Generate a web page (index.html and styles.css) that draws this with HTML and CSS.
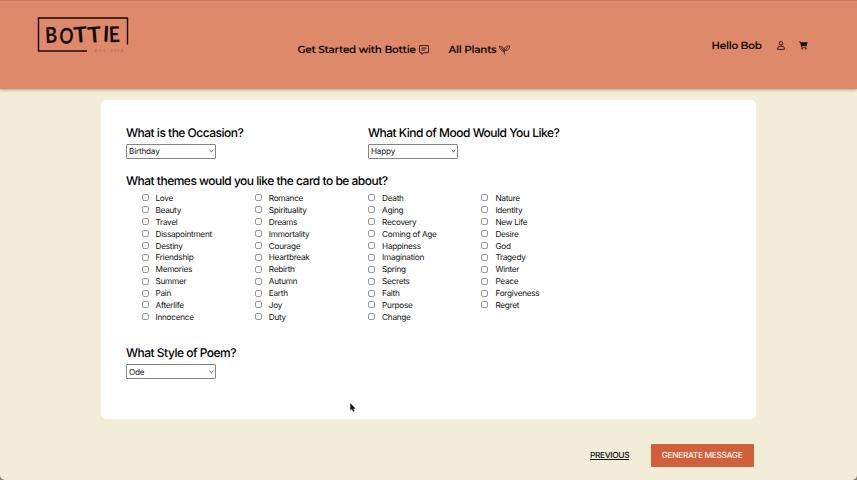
FILE: index.html
```html
<!DOCTYPE html>
<html lang="en">
<head>
<meta charset="utf-8">
<title>Bottie</title>
<link rel="stylesheet" href="styles.css">
</head>
<body>
<header class="header">
  <a class="logo" aria-label="Bottie">
    <svg width="92" height="38" viewBox="0 0 92 38">
      <path d="M50 34H1.5V1H90.5V27.5" fill="none" stroke="#150b08" stroke-width="1.4"/>
      <g class="logo-name">
        <text transform="translate(8.4 26) rotate(-3) scale(.84 1)">B</text>
        <text transform="translate(21.8 26) rotate(5) scale(.8 1)">O</text>
        <text transform="translate(37.3 26) rotate(-5) scale(1.04 1)">T</text>
        <text transform="translate(51.2 26) rotate(-5) scale(1.04 1)">T</text>
        <text transform="translate(65.6 24.4) rotate(3)">I</text>
        <text transform="translate(72 25.2) rotate(-2) scale(.88 1)">E</text>
      </g>
      <text class="logo-est" x="58" y="35.3" textLength="28">EST. 2023</text>
    </svg>
  </a>
  <nav class="nav">
    <a class="nav-start"><span>Get Started with Bottie</span>
      <svg width="10" height="10" viewBox="0 0 10 10" fill="none" stroke="#20120d" stroke-width=".85"><path d="M1 .6h8q.5 0 .5.5v6q0 .5-.5.5H5L2.7 9.4V7.6H1q-.5 0-.5-.5v-6Q.5.6 1 .6z"/><path d="M2.3 3.1h5.4M2.3 5.1h3.6"/></svg></a>
    <a class="nav-plants"><span>All Plants</span>
      <svg width="11" height="10" viewBox="0 0 11 10" fill="none" stroke="#20120d" stroke-width=".7"><path d="M5.4 9.6V6.4M5.2 6.4C2.2 6.2.6 4 .5 1c3 .1 4.4 2 4.7 5.4zM5.6 5.2C4.8 2.6 7 .8 10.5.8c.2 3.2-1.6 5.4-4.9 4.4zM1.8 2.2l3.4 4.2 3.6-4.2"/></svg></a>
  </nav>
  <div class="account">
    <span class="hello">Hello Bob</span>
    <svg class="user" width="8" height="9" viewBox="0 0 8 9" fill="none" stroke="#20120d" stroke-width=".9"><circle cx="4" cy="2.4" r="1.8"/><path d="M.6 8.4C.6 6.1 1.5 5.2 3 5.2h2c1.5 0 2.4.9 2.4 3.2z"/></svg>
    <svg class="cart" width="9" height="9" viewBox="0 0 9 9"><path fill="#150b08" d="M0 .5h1.6l.3.8h6.8L7.7 5H2.8l.2.8h4.7v.7H2.3L1.1 1.2H0z"/><circle cx="3.1" cy="7.7" r=".8" fill="#150b08"/><circle cx="6.9" cy="7.7" r=".8" fill="#150b08"/></svg>
  </div>
</header>
<main>
  <form class="card">
    <div class="top">
      <section><h2>What is the Occasion?</h2><div class="select">Birthday<svg width="5" height="4" viewBox="0 0 5 4"><path d="M.6 1l1.9 1.8L4.4 1"/></svg></div></section>
      <section><h2>What Kind of Mood Would You Like?</h2><div class="select">Happy<svg width="5" height="4" viewBox="0 0 5 4"><path d="M.6 1l1.9 1.8L4.4 1"/></svg></div></section>
    </div>
    <section class="themes">
      <h2>What themes would you like the card to be about?</h2>
      <div class="grid">
        <label><i></i>Love</label><label><i></i>Beauty</label><label><i></i>Travel</label><label><i></i>Dissapointment</label><label><i></i>Destiny</label><label><i></i>Friendship</label><label><i></i>Memories</label><label><i></i>Summer</label><label><i></i>Pain</label><label><i></i>Afterlife</label><label><i></i>Innocence</label>
        <label><i></i>Romance</label><label><i></i>Spirituality</label><label><i></i>Dreams</label><label><i></i>Immortality</label><label><i></i>Courage</label><label><i></i>Heartbreak</label><label><i></i>Rebirth</label><label><i></i>Autumn</label><label><i></i>Earth</label><label><i></i>Joy</label><label><i></i>Duty</label>
        <label><i></i>Death</label><label><i></i>Aging</label><label><i></i>Recovery</label><label><i></i>Coming of Age</label><label><i></i>Happiness</label><label><i></i>Imagination</label><label><i></i>Spring</label><label><i></i>Secrets</label><label><i></i>Faith</label><label><i></i>Purpose</label><label><i></i>Change</label>
        <label><i></i>Nature</label><label><i></i>Identity</label><label><i></i>New Life</label><label><i></i>Desire</label><label><i></i>God</label><label><i></i>Tragedy</label><label><i></i>Winter</label><label><i></i>Peace</label><label><i></i>Forgiveness</label><label><i></i>Regret</label>
      </div>
    </section>
    <section class="style"><h2>What Style of Poem?</h2><div class="select">Ode<svg width="5" height="4" viewBox="0 0 5 4"><path d="M.6 1l1.9 1.8L4.4 1"/></svg></div></section>
  </form>
  <div class="actions"><a class="previous">PREVIOUS</a><a class="generate">GENERATE MESSAGE</a></div>
</main>
<svg class="cursor" width="6" height="9" viewBox="0 0 6 9"><path d="M.5.5v6.6L2 5.8l1.1 2.6 1.2-.5-1.1-2.5h2z" fill="#111" stroke="#111" stroke-width=".4"/></svg>
</body>
</html>
```
FILE: styles.css
```css
* { box-sizing: border-box; }
html { background: #8a8069; }
body {
  margin: 0;
  height: 480px;
  overflow: hidden;
  background: #f2edd8;
  border-radius: 0 0 5px 5px;
  font-family: Inter, "Liberation Sans", sans-serif;
  color: #111;
  text-rendering: geometricPrecision;
}
.header {
  display: flex;
  height: 89px;
  padding-left: 37px;
  background: #de896a;
  border-top: 1px solid #c97d62;
  box-shadow: 0 1px 3px rgba(0, 0, 0, .3);
  font-family: Montserrat, Inter, sans-serif;
  font-size: 10.4px;
  font-weight: 600;
  line-height: 14px;
  letter-spacing: -.24px;
  color: #0d0705;
  white-space: nowrap;
}
.logo { width: 260.5px; padding-top: 16px; letter-spacing: 0; }
.logo svg { display: block; }
.logo-name {
  font: 700 21.8px Lato, sans-serif;
  fill: #150b08;
}
.logo-est { font: 4px "Liberation Sans", sans-serif; fill: #9a5d48; }
.nav { display: flex; padding-top: 42px; width: 414px; }
.nav a { display: flex; gap: 3px; }
.nav svg { margin-top: 1.5px; }
.nav-start { width: 151px; }
.account { display: flex; padding-top: 38px; }
.hello { width: 65px; }
.user { margin-top: 2px; }
.cart { margin: 2px 0 0 14.5px; }
.card {
  display: block;
  width: 655px;
  height: 319px;
  margin: 11px 0 0 101px;
  padding: 25px 25px;
  background: #fff;
  border-radius: 5px;
}
h2 {
  margin: 0;
  font-size: 12px;
  font-weight: 500;
  line-height: 16px;
  letter-spacing: -.5px;
  color: #000;
  white-space: nowrap;
}
.top { display: grid; grid-template-columns: 242px 1fr; }
.select {
  display: flex;
  align-items: center;
  justify-content: space-between;
  width: 89.5px;
  height: 15.5px;
  margin-top: 2.5px;
  padding: 0 1px 0 2px;
  border: 1px solid #858585;
  border-radius: 1px;
  font-size: 8.1px;
  letter-spacing: -.16px;
}
.select svg { fill: none; stroke: #333; stroke-width: .8; }
.themes { margin-top: 14px; }
.grid {
  display: grid;
  grid-template-rows: repeat(11, 11.9px);
  grid-auto-columns: 113.3px;
  grid-auto-flow: column;
  margin: 3px 0 0 15.5px;
  font-size: 8.2px;
  letter-spacing: -.26px;
}
.grid label { display: flex; align-items: center; gap: 7px; }
.grid i { width: 7px; height: 7px; border: 1px solid #999; border-radius: 2px; }
.style { margin-top: 22px; }
.style .select { margin-top: 3px; }
.actions {
  display: flex;
  align-items: center;
  margin: 25px 0 0 590px;
  font-size: 8.4px;
  font-weight: 500;
  letter-spacing: -.36px;
}
.previous { width: 60.5px; text-decoration: underline; }
.generate {
  display: flex;
  align-items: center;
  justify-content: center;
  width: 103px;
  height: 23px;
  background: #cf603b;
  border-radius: 1px;
  color: #fbeee7;
  box-shadow: 0 0 6px rgba(240, 225, 215, .4);
  white-space: nowrap;
}
.cursor { position: absolute; left: 350px; top: 403px; }
```
